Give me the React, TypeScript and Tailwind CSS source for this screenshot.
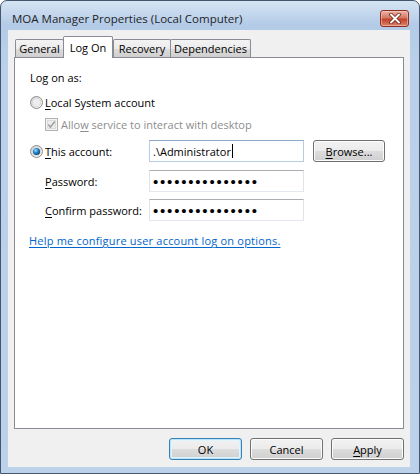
import React from 'react';

// Win7-style radio button
const Radio = ({ checked }: { checked?: boolean }) => (
  <svg width="13" height="13" viewBox="0 0 13 13" className="shrink-0" aria-hidden>
    <defs>
      <linearGradient id={checked ? 'rbo1' : 'rbo0'} x1="0" y1="0" x2="1" y2="1">
        <stop offset="0" stopColor="#cfcfcf" />
        <stop offset="1" stopColor="#fbfbfb" />
      </linearGradient>
      <radialGradient id="rdot" cx="0.38" cy="0.35" r="0.7">
        <stop offset="0" stopColor="#a6e1ff" />
        <stop offset="0.45" stopColor="#2a8ad0" />
        <stop offset="1" stopColor="#0c3d66" />
      </radialGradient>
    </defs>
    <circle cx="6.5" cy="6.5" r="6" fill={`url(#${checked ? 'rbo1' : 'rbo0'})`} stroke="#8e8f8f" />
    <circle cx="6.5" cy="6.5" r="4.2" fill="#ededed" stroke="#d0d0d0" strokeWidth="0.6" />
    {checked && <circle cx="6.5" cy="6.5" r="3.6" fill="url(#rdot)" />}
  </svg>
);

// disabled, checked checkbox
const CheckDisabled = () => (
  <svg width="13" height="13" viewBox="0 0 13 13" className="shrink-0" aria-hidden>
    <rect x="0.5" y="0.5" width="12" height="12" fill="#f4f4f4" stroke="#b1b1b1" />
    <rect x="2.5" y="2.5" width="8" height="8" fill="#ececec" stroke="#dcdcdc" />
    <path d="M3.3 6.6 L5.4 9.2 L9.8 3.4" fill="none" stroke="#a2a2a2" strokeWidth="1.6" />
  </svg>
);

const CloseButton = () => (
  <div className="w-[29px] h-[17px] rounded-[3px] border border-[#8a2f22] bg-[linear-gradient(to_bottom,#eab3a5,#d47864_45%,#c2432b_55%,#d9826a)] shadow-[inset_0_0_0_1px_rgba(255,210,200,0.5)] flex items-center justify-center">
    <svg width="14" height="11" viewBox="0 0 14 11" aria-hidden>
      <path d="M3 1.5 L11 9.5 M11 1.5 L3 9.5" stroke="#6e2015" strokeWidth="3.6" strokeLinecap="round" />
      <path d="M3 1.5 L11 9.5 M11 1.5 L3 9.5" stroke="#ffffff" strokeWidth="2" strokeLinecap="round" />
    </svg>
  </div>
);

type TabProps = { label: string; width: string; active?: boolean };

const Tab = ({ label, width, active }: TabProps) =>
  active ? (
    <div className={`${width} h-[22px] -mb-px relative z-10 border border-b-0 border-[#898c95] bg-white flex items-start justify-center pt-[3px] rounded-t-[2px]`}>
      {label}
    </div>
  ) : (
    <div className={`${width} h-[18px] -mr-px border border-b-0 border-[#898c95] bg-[linear-gradient(to_bottom,#f3f3f3,#ebebeb_50%,#dddddd_50%,#cfcfcf)] flex items-center justify-center rounded-t-[2px]`}>
      {label}
    </div>
  );

const Button = ({ children, primary, className = '' }: { children: React.ReactNode; primary?: boolean; className?: string }) => (
  <div
    className={`h-[22px] rounded-[3px] border flex items-center justify-center bg-[linear-gradient(to_bottom,#f2f2f2,#ebebeb_50%,#dddddd_50%,#cfcfcf)] ${
      primary
        ? 'border-[#3c7fb1] shadow-[inset_0_0_0_1px_#b6e6fb,inset_0_0_0_2px_#e2f4fc]'
        : 'border-[#707070] shadow-[inset_0_0_0_1px_#fcfcfc]'
    } ${className}`}
  >
    {children}
  </div>
);

const Field = ({ children, focused }: { children: React.ReactNode; focused?: boolean }) => (
  <div
    className={`w-[155px] h-[22px] border bg-white flex items-center pl-[3px] ${
      focused
        ? 'border-[#b7cde3] border-t-[#8aa7c6]'
        : 'border-[#e2e3ea] border-t-[#abadb3] border-b-[#e3e9ef]'
    }`}
  >
    {children}
  </div>
);

const Dots = () => (
  <span className="font-['Liberation_Sans',sans-serif] text-[15px] leading-none tracking-[1.8px] text-black">
    {'•'.repeat(15)}
  </span>
);

export default function App() {
  return (
    <div className="w-[420px] h-[474px] overflow-hidden bg-white">
      <div className="w-[420px] h-[474px] flex flex-col border border-[#44566d] rounded-t-[7px] bg-[linear-gradient(to_bottom,#d6e4f3,#b3cbe7_24px,#bad0ea_60px,#bcd2ea)] font-['Open_Sans',sans-serif] text-[11px] leading-[15px] text-black">
        {/* title bar */}
        <div className="h-[29px] flex justify-between items-start pl-[11px] pr-[10px] shrink-0">
          <div className="mt-[10px] text-[11.5px] leading-[16px] text-[#1e1e1e]">MOA Manager Properties (Local Computer)</div>
          <div className="mt-[9px]">
            <CloseButton />
          </div>
        </div>

        {/* client area */}
        <div className="ml-[7px] mr-[9px] h-[437px] bg-[#f0f0f0] flex flex-col shrink-0">
          {/* tabs */}
          <div className="h-[27px] flex items-end pl-[7px]">
            <Tab label="General" width="w-[49px]" />
            <Tab label="Log On" width="w-[50px]" active />
            <Tab label="Recovery" width="w-[58px]" />
            <Tab label="Dependencies" width="w-[81px]" />
          </div>

          {/* panel */}
          <div className="mx-[6px] h-[372px] bg-white border border-[#898c95] pl-[15px] pt-[12px] flex flex-col">
            <div className="h-[15px]">Log on as:</div>

            <div className="mt-[9px] h-[16px] flex items-center gap-[2px]">
              <Radio />
              <span>
                <u className="underline-offset-2">L</u>ocal System account
              </span>
            </div>

            <div className="mt-[7px] h-[15px] flex items-center gap-[3px] pl-[15px] text-[#8d8d8d]">
              <CheckDisabled />
              <span>
                Allo<u className="underline-offset-2">w</u> service to interact with desktop
              </span>
            </div>

            <div className="mt-[8px] h-[22px] flex items-center">
              <div className="w-[119px] flex items-center gap-[2px]">
                <Radio checked />
                <span>
                  <u className="underline-offset-2">T</u>his account:
                </span>
              </div>
              <Field focused>
                <span>.\Administrator</span>
                <span className="w-px h-[14px] bg-black ml-px" />
              </Field>
              <Button className="w-[72px] ml-[9px]">
                <span>
                  <u className="underline-offset-2">B</u>rowse...
                </span>
              </Button>
            </div>

            <div className="mt-[8px] h-[22px] flex items-center">
              <div className="w-[119px] pl-[15px]">
                <u className="underline-offset-2">P</u>assword:
              </div>
              <Field>
                <Dots />
              </Field>
            </div>

            <div className="mt-[7px] h-[22px] flex items-center">
              <div className="w-[119px] pl-[15px]">
                <u className="underline-offset-2">C</u>onfirm password:
              </div>
              <Field>
                <Dots />
              </Field>
            </div>

            <div className="mt-[12px] h-[15px] -ml-px">
              <span className="text-[#0066cc] underline underline-offset-2 tracking-[0.2px]">Help me configure user account log on options.</span>
            </div>
          </div>

          {/* buttons */}
          <div className="mt-[9px] flex justify-end gap-[8px] pr-[6px]">
            <Button primary className="w-[73px]">OK</Button>
            <Button className="w-[73px]">Cancel</Button>
            <Button className="w-[73px]">
              <span>
                <u className="underline-offset-2">A</u>pply
              </span>
            </Button>
          </div>
        </div>
      </div>
    </div>
  );
}
